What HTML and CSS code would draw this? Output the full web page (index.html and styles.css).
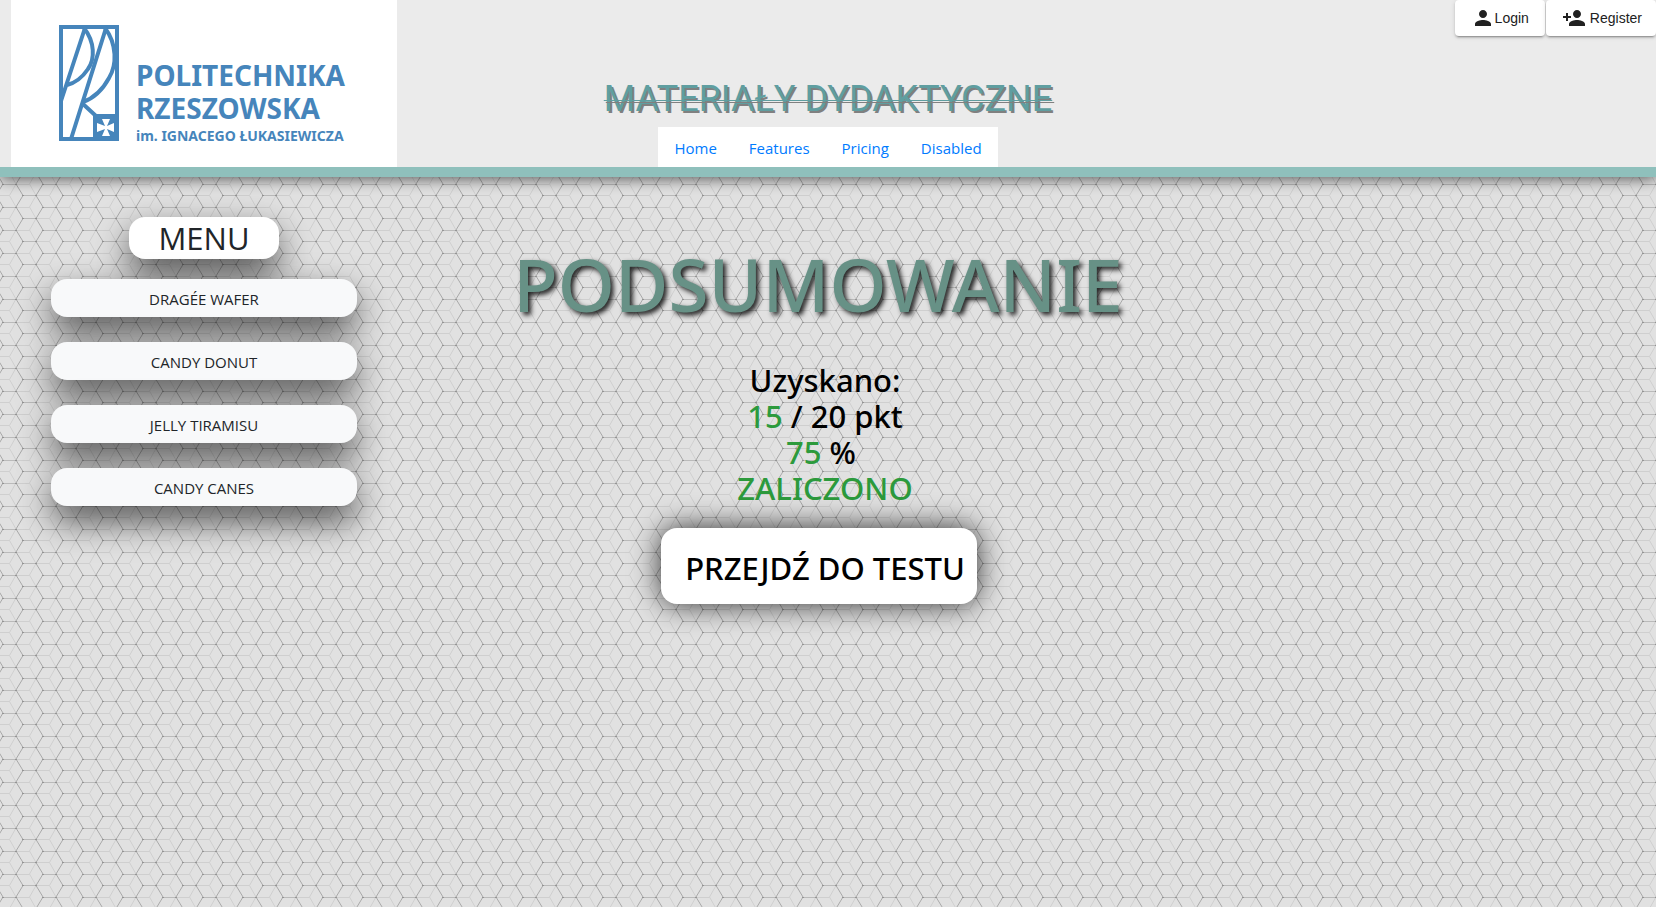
FILE: index.html
```html
<!DOCTYPE html>
<html lang="pl">
<head>
<meta charset="utf-8">
<meta name="viewport" content="width=device-width, initial-scale=1">
<title>Materiały dydaktyczne</title>
<link rel="stylesheet" href="styles.css">
</head>
<body>
<header class="header">
  <a class="logo" href="#">
    <svg class="logo-mark" viewBox="0 0 60 116" aria-hidden="true">
      <path d="M2 2H58V114H2Z" fill="none" stroke="#4685bb" stroke-width="4"/>
      <g fill="none" stroke="#4685bb" stroke-width="4">
        <path d="M26 3L2 76M47 3L12 114"/>
        <path d="M25 3C36 17 36 34 29 44C23 53 16 58 8 60"/>
        <path d="M46 3C58 19 58 40 50 53C43 66 35 73 24 77M24 79L37 91"/>
      </g>
      <path d="M34 89H60V116H34Z" fill="#4685bb"/>
      <path d="M43 94H51L48 101L55 98V107L48 104L51 111H43L46 104L38 107V98L46 101Z" fill="#fff"/>
    </svg>
    <span class="logo-text">
      <span class="logo-name">POLITECHNIKA</span>
      <span class="logo-name">RZESZOWSKA</span>
      <span class="logo-patron">im. IGNACEGO ŁUKASIEWICZA</span>
    </span>
  </a>
  <div class="brand">
    <h1 class="site-title">MATERIAŁY DYDAKTYCZNE</h1>
    <nav class="nav">
      <a href="#">Home</a>
      <a href="#">Features</a>
      <a href="#">Pricing</a>
      <a href="#">Disabled</a>
    </nav>
  </div>
  <div class="account">
    <button class="account-button" type="button">
      <svg viewBox="0 0 24 24" aria-hidden="true"><path d="M12 12c2.21 0 4-1.79 4-4s-1.79-4-4-4-4 1.79-4 4 1.79 4 4 4zm0 2c-2.67 0-8 1.34-8 4v2h16v-2c0-2.66-5.33-4-8-4z"/></svg>
      <span>Login</span>
    </button>
    <button class="account-button account-register" type="button">
      <svg viewBox="0 0 24 24" aria-hidden="true"><path d="M15 12c2.21 0 4-1.79 4-4s-1.79-4-4-4-4 1.79-4 4 1.79 4 4 4zm-9-2V7H4v3H1v2h3v3h2v-3h3v-2H6zm9 4c-2.67 0-8 1.34-8 4v2h16v-2c0-2.66-5.33-4-8-4z"/></svg>
      <span>Register</span>
    </button>
  </div>
</header>
<div class="page">
  <aside class="sidebar">
    <h2 class="menu-title">MENU</h2>
    <a class="menu-item" href="#">DRAGÉE WAFER</a>
    <a class="menu-item" href="#">CANDY DONUT</a>
    <a class="menu-item" href="#">JELLY TIRAMISU</a>
    <a class="menu-item" href="#">CANDY CANES</a>
  </aside>
  <main class="summary">
    <h2 class="summary-title">PODSUMOWANIE</h2>
    <div class="result">
      <div>Uzyskano:</div>
      <div><span class="good">15</span> / 20 pkt</div>
      <div class="percent"><span class="good">75</span> %</div>
      <div class="good">ZALICZONO</div>
    </div>
    <button class="test-button" type="button">PRZEJDŹ DO TESTU</button>
  </main>
</div>
</body>
</html>
```
FILE: styles.css
```css
* { box-sizing: border-box; }

body {
  margin: 0;
  min-height: 100vh;
  overflow-x: hidden;
  color: #212529;
  font: 15px/24px "Open Sans", "Noto Sans", sans-serif;
  background: #e1e1e1 url("data:image/svg+xml,%3Csvg xmlns='http://www.w3.org/2000/svg' width='40' height='23'%3E%3Cg fill='none'%3E%3Cpath stroke='%23cfcfcf' d='M0 11.5H9.5M16 0L9.5 11.5L16 23M16 .5H29.5M36 11.5L29.5 23M36 11.5L29.5 0M36 11.5H40'/%3E%3Cpath stroke='%23bababa' d='M3 .5H16M23 11.5H36'/%3E%3Cpath stroke='%23a8a8a8' d='M16 0L23 11.5L16 23M3 0L-4 11.5L3 23M43 0L36 11.5L43 23'/%3E%3C/g%3E%3Cg fill='%23949494'%3E%3Cpath d='M2 0h2v1h-2zM15 0h2v1h-2zM22 11h2v1h-2zM35 11h2v1h-2z'/%3E%3C/g%3E%3C/svg%3E");
}

a { text-decoration: none; }

.header {
  display: grid;
  grid-template-columns: 1fr 2fr 1fr;
  height: 177px;
  background: #ebebeb;
  border-bottom: 10px solid #8fc0bc;
  box-shadow: 0 2px 14px rgba(0, 0, 0, 0.6);
}

.logo {
  display: flex;
  gap: 17px;
  margin: 0 17px 0 11px;
  padding: 25px 0 0 48px;
  background: #fff;
  color: #4685bb;
}

.logo-mark { width: 60px; height: 116px; flex: none; }

.logo-text {
  display: flex;
  flex-direction: column;
  padding-top: 34px;
  font-family: "Noto Sans", sans-serif;
  font-weight: 700;
  white-space: nowrap;
}

.logo-name { font-size: 28px; line-height: 33px; }
.logo-patron { font-size: 14px; line-height: 22px; }

.brand {
  display: flex;
  flex-direction: column;
  align-items: center;
  justify-content: flex-end;
}

.site-title {
  margin: 0 0 4px;
  color: #5f9ea0;
  font: 400 36px/48px Roboto, sans-serif;
  text-decoration: line-through 1px;
  text-shadow: 2px 2px #808080;
  white-space: nowrap;
}

.nav { display: flex; background: #fff; }
.nav a { padding: 9px 16px 7px; color: #007bff; }

.account {
  display: flex;
  justify-content: flex-end;
  align-items: flex-start;
  gap: 1px;
}

.account-button {
  display: flex;
  align-items: center;
  height: 36px;
  padding: 0 16px;
  border: 0;
  border-radius: 4px;
  background: #fff;
  color: #212121;
  font: 14px/36px "Liberation Sans", Arial, sans-serif;
  box-shadow: 0 3px 1px -2px rgba(0, 0, 0, 0.2), 0 2px 2px rgba(0, 0, 0, 0.14), 0 1px 5px rgba(0, 0, 0, 0.12);
}

.account-button svg { width: 24px; height: 24px; fill: currentColor; }
.account-register { gap: 4px; padding-right: 14px; }

.page { display: grid; grid-template-columns: 1fr 2fr 1fr; }

.sidebar {
  display: flex;
  flex-direction: column;
  align-items: center;
  padding: 40px 57px 0 51px;
}

.menu-title {
  margin: 0 0 20px;
  width: 150px;
  border-radius: 16px;
  background: #fff;
  font-size: 31px;
  font-weight: 400;
  line-height: 42px;
  text-align: center;
  box-shadow: 0 15px 35px rgba(0, 0, 0, 0.65);
}

.menu-item {
  align-self: stretch;
  margin-bottom: 25px;
  padding: 8px 0 6px;
  border-radius: 16px;
  background: #f8f9fa;
  color: #212529;
  text-align: center;
  box-shadow: 0 15px 35px rgba(0, 0, 0, 0.65);
}

.summary {
  display: flex;
  flex-direction: column;
  align-items: center;
  padding: 62px 6px 0 0;
  color: #000;
  font-family: "Noto Sans", sans-serif;
  font-weight: 500;
}

.summary-title {
  margin: 0 14px 33px 0;
  color: #679186;
  font-size: 73px;
  font-weight: 500;
  line-height: 90px;
  text-shadow: 3px 3px 5px rgba(0, 0, 0, 0.85);
}

.result {
  margin-bottom: 22px;
  font-size: 31px;
  line-height: 36px;
  text-align: center;
}

.percent { padding-right: 8px; }
.good { color: #2c9a3c; }

.test-button {
  margin-right: 12px;
  padding: 4px 12px 0 24px;
  height: 76px;
  border: 0;
  border-radius: 16px;
  background: #fff;
  color: #000;
  font: inherit;
  font-size: 31px;
  box-shadow: 0 0 30px rgba(0, 0, 0, 0.8);
}
```
